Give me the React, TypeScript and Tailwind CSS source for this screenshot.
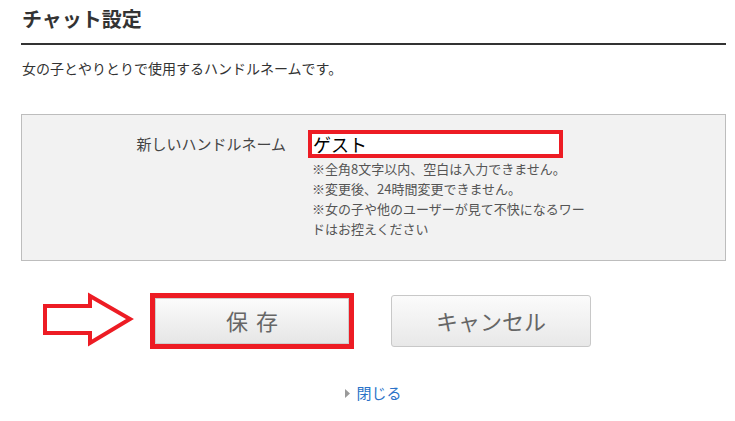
import React from 'react';

const JP = { fontFamily: '"Noto Sans CJK JP", "Noto Sans", sans-serif' };

const notes = [
  '※全角8文字以内、空白は入力できません。',
  '※変更後、24時間変更できません。',
  '※女の子や他のユーザーが見て不快になるワードはお控えください',
];

const App: React.FC = () => {
  return (
    <div className="w-[735px] h-[421px] bg-white pl-[21px] pr-[9px] overflow-hidden" style={JP}>
      {/* title */}
      <h2 className="pt-[5px] pb-[10px] pl-px border-b-2 border-[#333] text-[20px] leading-[28px] font-bold text-[#333]">
        チャット設定
      </h2>

      <p className="mt-[13px] pl-px text-[14px] leading-[20px] text-[#333]">
        女の子とやりとりで使用するハンドルネームです。
      </p>

      {/* form panel */}
      <div className="mt-[36px] h-[147px] bg-[#f2f2f2] border border-[#bdbdbd] flex pt-[15px]">
        <div className="w-[264px] h-[28px] flex items-center justify-end text-[15px] text-[#444]">
          新しいハンドルネーム
        </div>
        <div className="ml-[22px] flex flex-col">
          <div className="w-[255px] h-[28px] border-4 border-[#ed1c24] bg-white flex items-center pl-[1px] text-[18px] leading-none text-black">
            ゲスト
          </div>
          <div className="w-[280px] pl-[4px] pt-px text-[13px] leading-[20px] text-[#555]">
            {notes.map(n => (
              <p key={n}>{n}</p>
            ))}
          </div>
        </div>
      </div>

      {/* buttons */}
      <div className="mt-[31px] flex items-center">
        <svg width="98" height="58" viewBox="0 0 98 58" className="ml-[19px] shrink-0">
          <polygon
            points="5,14 50,14 50,4 90,27 50,51 50,41 5,41"
            fill="none"
            stroke="#ed1c24"
            strokeWidth="4"
            strokeLinejoin="miter"
          />
        </svg>
        <div className="ml-[12px] w-[204px] h-[56px] border-[5px] border-[#ed1c24] flex">
          <button className="flex-1 border border-[#cfcfcf] bg-gradient-to-b from-[#fbfbfb] to-[#e6e6e6] text-[22px] leading-none pb-[3px] text-[#666]">
            保<span className="ml-[8px]">存</span>
          </button>
        </div>
        <button className="ml-[37px] w-[200px] h-[52px] border border-[#c8c8c8] rounded-[3px] bg-gradient-to-b from-[#fbfbfb] to-[#e8e8e8] text-[22px] leading-none pb-[2px] text-[#666]">
          キャンセル
        </button>
      </div>

      {/* close */}
      <div className="mt-[33px] flex justify-center items-center">
        <a className="flex items-center gap-[6px] text-[15px] leading-[20px] text-[#2a72c8] cursor-pointer">
          <svg width="5" height="9" viewBox="0 0 5 9">
            <polygon points="0,0 5,4.5 0,9" fill="#9a9a9a" />
          </svg>
          閉じる
        </a>
      </div>
    </div>
  );
};

export default App;
